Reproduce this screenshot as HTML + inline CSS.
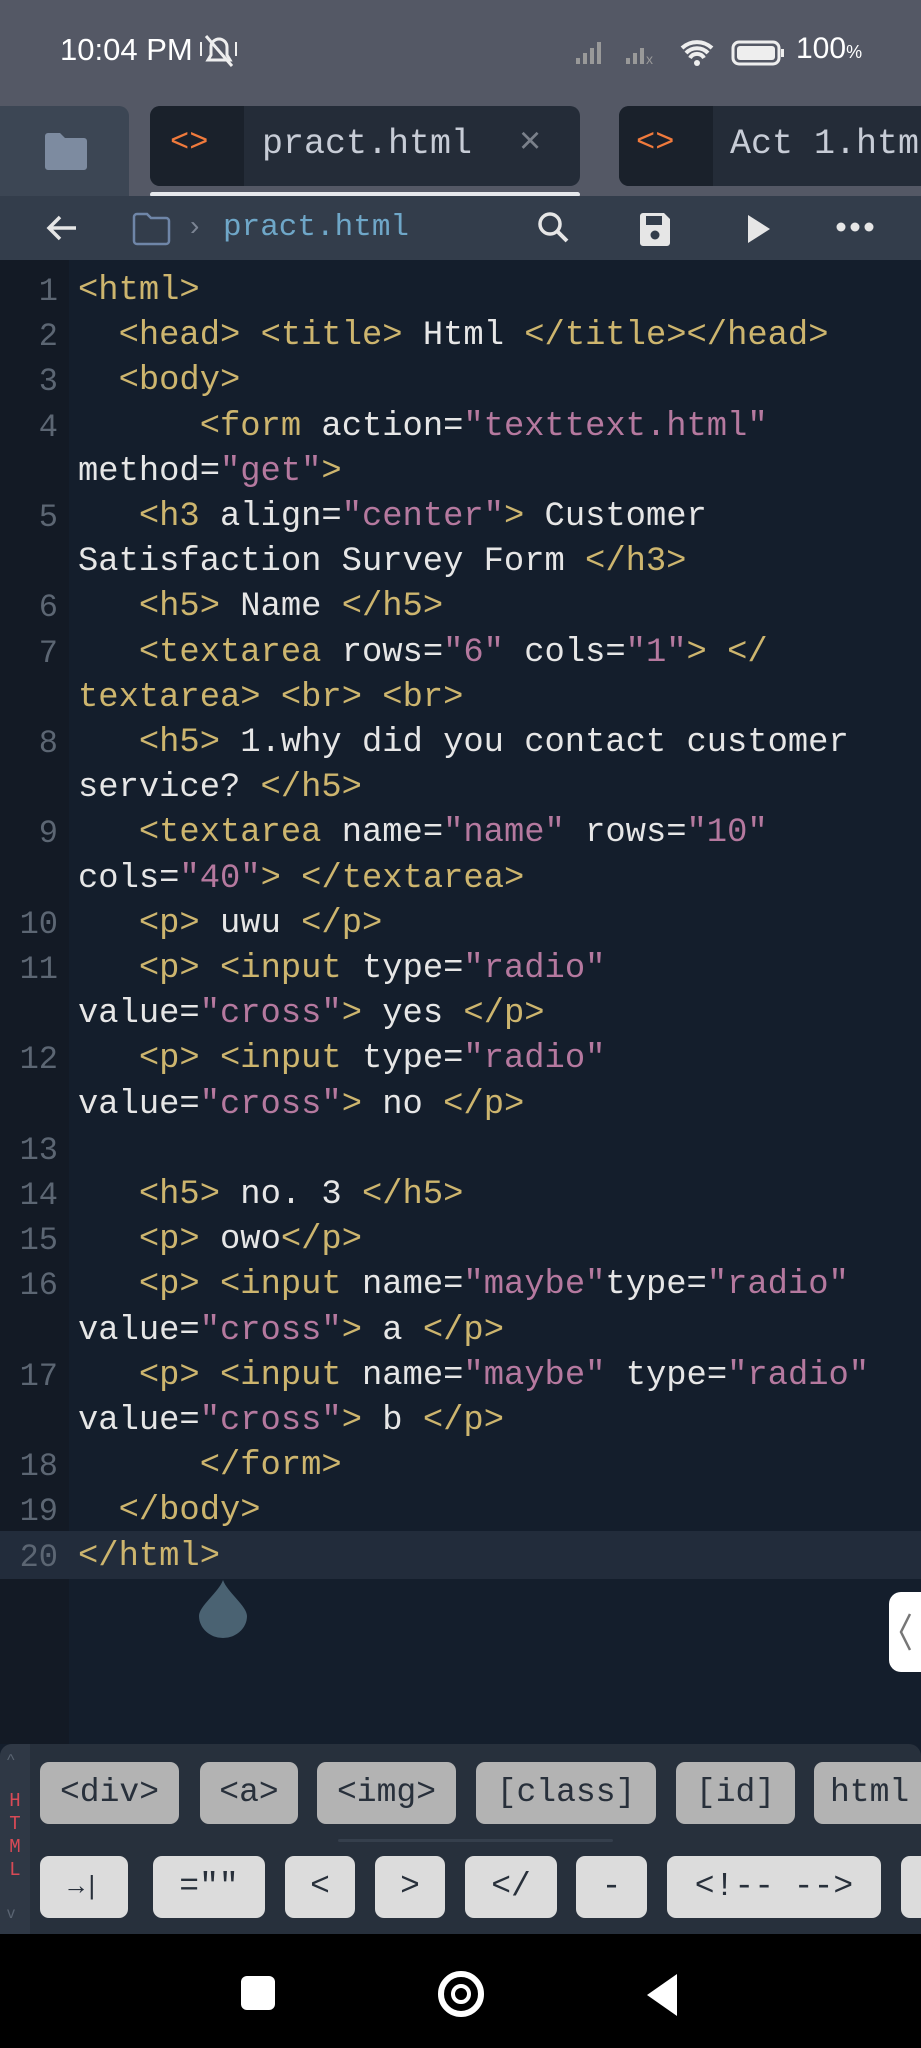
<!DOCTYPE html>
<html><head><meta charset="utf-8">
<style>
*{margin:0;padding:0;box-sizing:border-box}
body{width:921px;height:2048px;overflow:hidden;background:#141e2c;font-family:"Liberation Sans",sans-serif;position:relative}
.abs{position:absolute;white-space:nowrap}
.mono{font-family:"Liberation Mono",monospace}
#status{left:0;top:0;width:921px;height:106px;background:#545865}
#tabs{left:0;top:106px;width:921px;height:90px;background:#545865}
#toolbar{left:0;top:196px;width:921px;height:64px;background:#333d4b}
#gutter{left:0;top:260px;width:69px;height:1484px;background:#131a25}
.ln{position:absolute;left:0;width:58px;text-align:right;color:#5c6673;font-size:32px;font-family:"Liberation Mono",monospace;line-height:45.2px}
#code{position:absolute;left:78px;top:269px;font-family:"Liberation Mono",monospace;font-size:33.8px;color:#e6e6e6;white-space:pre;line-height:45.2px}
.t{color:#cdb56e}.v{color:#b5799f}
.btn{position:absolute;border-radius:9px;font-family:"Liberation Mono",monospace;font-size:33px;color:#28303b;text-align:center;white-space:nowrap;overflow:hidden}
.r1{top:1762px;height:62px;line-height:62px;background:#b3b3b3}
.r2{top:1856px;height:62px;line-height:62px;background:#dcdcdc}
</style></head><body>
<div id="status" class="abs"></div>
<div class="abs" style="left:60px;top:32px;color:#fff;font-size:31px;">10:04 PM</div>
<svg class="abs" style="left:198px;top:32px" width="42" height="38" viewBox="0 0 42 38"><path d="M10 28h22l-3-5V15a8 8 0 0 0-16 0v8z" fill="none" stroke="#eee" stroke-width="3"/><path d="M8 4l26 30" stroke="#eee" stroke-width="3"/><path d="M3 10v14M38 10v14" stroke="#eee" stroke-width="2"/></svg>
<svg class="abs" style="left:576px;top:36px" width="220" height="32" viewBox="0 0 220 32"><g fill="#999"><rect x="0" y="22" width="4" height="6"/><rect x="7" y="17" width="4" height="11"/><rect x="14" y="12" width="4" height="16"/><rect x="21" y="6" width="4" height="22"/><rect x="50" y="22" width="4" height="6"/><rect x="57" y="17" width="4" height="11"/><rect x="64" y="12" width="4" height="16"/><text x="70" y="28" font-size="14" fill="#999">x</text></g><path d="M106 12a22 22 0 0 1 30 0M110 17a15 15 0 0 1 22 0M114 22a8 8 0 0 1 14 0" stroke="#eee" stroke-width="4" fill="none"/><circle cx="121" cy="27" r="3" fill="#eee"/><rect x="157" y="6" width="46" height="22" rx="6" fill="none" stroke="#eee" stroke-width="3"/><rect x="161" y="10" width="38" height="14" rx="3" fill="#eee"/><rect x="205" y="13" width="3" height="8" fill="#eee"/></svg>
<div class="abs" style="left:796px;top:32px;color:#fff;font-size:30px;">100<span style="font-size:18px">%</span></div>

<div id="tabs" class="abs"></div>
<div class="abs" style="left:0;top:106px;width:129px;height:90px;background:#3c4654;border-radius:0 10px 0 0"></div>
<svg class="abs" style="left:42px;top:132px" width="48" height="40" viewBox="0 0 48 40"><path d="M3 4a3 3 0 0 1 3-3h12l5 5h19a3 3 0 0 1 3 3v26a3 3 0 0 1-3 3H6a3 3 0 0 1-3-3z" fill="#7d8ba0"/></svg>
<div class="abs" style="left:150px;top:106px;width:430px;height:80px;background:#242c38;border-radius:10px;overflow:hidden"><div style="width:94px;height:80px;background:#1a212b"></div></div>
<div class="abs mono" style="left:170px;top:124px;color:#f07a3c;font-size:32px">&lt;&gt;</div>
<div class="abs mono" style="left:262px;top:124px;color:#c7ccd6;font-size:35px">pract.html</div>
<div class="abs" style="left:519px;top:120px;color:#7a808a;font-size:38px">×</div>
<div class="abs" style="left:150px;top:192px;width:430px;height:5px;background:#e6e8ec;border-radius:3px"></div>
<div class="abs" style="left:619px;top:106px;width:320px;height:80px;background:#242c38;border-radius:10px;overflow:hidden"><div style="width:94px;height:80px;background:#1a212b"></div></div>
<div class="abs mono" style="left:636px;top:124px;color:#f07a3c;font-size:32px">&lt;&gt;</div>
<div class="abs mono" style="left:730px;top:124px;color:#c7ccd6;font-size:35px">Act 1.html</div>

<div id="toolbar" class="abs"></div>
<svg class="abs" style="left:44px;top:210px" width="36" height="36" viewBox="0 0 36 36"><path d="M32 18H6M16 7L5 18l11 11" stroke="#e6e6e6" stroke-width="3.5" fill="none"/></svg>
<svg class="abs" style="left:132px;top:212px" width="40" height="34" viewBox="0 0 40 34"><path d="M2 5a3 3 0 0 1 3-3h10l4 4h15a3 3 0 0 1 3 3v20a3 3 0 0 1-3 3H5a3 3 0 0 1-3-3z" fill="none" stroke="#6f86a8" stroke-width="2.5"/></svg>
<div class="abs" style="left:190px;top:210px;color:#7c8594;font-size:28px">›</div>
<div class="abs mono" style="left:223px;top:210px;color:#6fa7c8;font-size:31px">pract.html</div>
<svg class="abs" style="left:536px;top:210px" width="36" height="36" viewBox="0 0 36 36"><circle cx="14" cy="14" r="10" stroke="#e6e6e6" stroke-width="3.5" fill="none"/><path d="M21 21l10 10" stroke="#e6e6e6" stroke-width="4"/></svg>
<svg class="abs" style="left:638px;top:211px" width="34" height="36" viewBox="0 0 34 36"><path d="M4 2h22l6 6v24a3 3 0 0 1-3 3H5a3 3 0 0 1-3-3V5a3 3 0 0 1 3-3z" fill="#e6e6e6"/><rect x="8" y="5" width="16" height="9" fill="#333d4b"/><circle cx="17" cy="24" r="4.5" fill="#333d4b"/></svg>
<svg class="abs" style="left:744px;top:212px" width="30" height="34" viewBox="0 0 30 34"><path d="M4 3l22 14L4 31z" fill="#e6e6e6"/></svg>
<svg class="abs" style="left:835px;top:220px" width="40" height="14" viewBox="0 0 40 14"><circle cx="6" cy="7" r="4.5" fill="#e6e6e6"/><circle cx="20" cy="7" r="4.5" fill="#e6e6e6"/><circle cx="34" cy="7" r="4.5" fill="#e6e6e6"/></svg>

<div id="gutter" class="abs"></div>
<div class="abs" style="left:0;top:1531px;width:921px;height:48px;background:#222c3b"></div>
<div class="abs" style="left:0;top:269px;width:69px">
<div class="ln" style="top:0">1</div><div class="ln" style="top:45.2px">2</div><div class="ln" style="top:90.4px">3</div><div class="ln" style="top:135.6px">4</div>
<div class="ln" style="top:226px">5</div><div class="ln" style="top:316.4px">6</div><div class="ln" style="top:361.6px">7</div><div class="ln" style="top:452px">8</div>
<div class="ln" style="top:542.4px">9</div><div class="ln" style="top:632.8px">10</div><div class="ln" style="top:678px">11</div><div class="ln" style="top:768.4px">12</div>
<div class="ln" style="top:858.8px">13</div><div class="ln" style="top:904px">14</div><div class="ln" style="top:949.2px">15</div><div class="ln" style="top:994.4px">16</div>
<div class="ln" style="top:1084.8px">17</div><div class="ln" style="top:1175.2px">18</div><div class="ln" style="top:1220.4px">19</div><div class="ln" style="top:1265.6px">20</div>
</div>
<div id="code"><span class="t">&lt;html&gt;</span>
  <span class="t">&lt;head&gt;</span> <span class="t">&lt;title&gt;</span> Html <span class="t">&lt;/title&gt;&lt;/head&gt;</span>
  <span class="t">&lt;body&gt;</span>
      <span class="t">&lt;form</span> action=<span class="v">"texttext.html"</span>
method=<span class="v">"get"</span><span class="t">&gt;</span>
   <span class="t">&lt;h3</span> align=<span class="v">"center"</span><span class="t">&gt;</span> Customer
Satisfaction Survey Form <span class="t">&lt;/h3&gt;</span>
   <span class="t">&lt;h5&gt;</span> Name <span class="t">&lt;/h5&gt;</span>
   <span class="t">&lt;textarea</span> rows=<span class="v">"6"</span> cols=<span class="v">"1"</span><span class="t">&gt;</span> <span class="t">&lt;/</span>
<span class="t">textarea&gt;</span> <span class="t">&lt;br&gt;</span> <span class="t">&lt;br&gt;</span>
   <span class="t">&lt;h5&gt;</span> 1.why did you contact customer
service? <span class="t">&lt;/h5&gt;</span>
   <span class="t">&lt;textarea</span> name=<span class="v">"name"</span> rows=<span class="v">"10"</span>
cols=<span class="v">"40"</span><span class="t">&gt;</span> <span class="t">&lt;/textarea&gt;</span>
   <span class="t">&lt;p&gt;</span> uwu <span class="t">&lt;/p&gt;</span>
   <span class="t">&lt;p&gt;</span> <span class="t">&lt;input</span> type=<span class="v">"radio"</span>
value=<span class="v">"cross"</span><span class="t">&gt;</span> yes <span class="t">&lt;/p&gt;</span>
   <span class="t">&lt;p&gt;</span> <span class="t">&lt;input</span> type=<span class="v">"radio"</span>
value=<span class="v">"cross"</span><span class="t">&gt;</span> no <span class="t">&lt;/p&gt;</span>

   <span class="t">&lt;h5&gt;</span> no. 3 <span class="t">&lt;/h5&gt;</span>
   <span class="t">&lt;p&gt;</span> owo<span class="t">&lt;/p&gt;</span>
   <span class="t">&lt;p&gt;</span> <span class="t">&lt;input</span> name=<span class="v">"maybe"</span>type=<span class="v">"radio"</span>
value=<span class="v">"cross"</span><span class="t">&gt;</span> a <span class="t">&lt;/p&gt;</span>
   <span class="t">&lt;p&gt;</span> <span class="t">&lt;input</span> name=<span class="v">"maybe"</span> type=<span class="v">"radio"</span>
value=<span class="v">"cross"</span><span class="t">&gt;</span> b <span class="t">&lt;/p&gt;</span>
      <span class="t">&lt;/form&gt;</span>
  <span class="t">&lt;/body&gt;</span>
<span class="t">&lt;/html&gt;</span></div>

<svg class="abs" style="left:199px;top:1580px" width="48" height="58" viewBox="0 0 48 58"><path d="M24 0C20 12 0 26 0 36a24 22 0 0 0 48 0C48 26 28 12 24 0z" fill="#4a6272"/></svg>
<div class="abs" style="left:889px;top:1592px;width:40px;height:80px;background:#fff;border-radius:12px 0 0 12px"></div>
<svg class="abs" style="left:896px;top:1612px" width="20" height="40" viewBox="0 0 20 40"><path d="M14 2L5 20l9 18" stroke="#777" stroke-width="2.5" fill="none"/></svg>

<div class="abs" style="left:0;top:1744px;width:921px;height:190px;background:#27303c;border-radius:12px 12px 0 0"></div>
<div class="abs" style="left:0;top:1744px;width:30px;height:190px;background:#2f3845;border-radius:12px 0 0 0"></div>
<div class="abs mono" style="left:7px;top:1790px;color:#d84a56;font-size:19px;line-height:23px;width:16px;text-align:center">H<br>T<br>M<br>L</div>
<div class="abs" style="left:7px;top:1752px;color:#5a6472;font-size:16px">^</div>
<div class="abs" style="left:7px;top:1905px;color:#5a6472;font-size:16px">v</div>
<div class="btn r1" style="left:40px;width:139px">&lt;div&gt;</div>
<div class="btn r1" style="left:200px;width:98px">&lt;a&gt;</div>
<div class="btn r1" style="left:317px;width:139px">&lt;img&gt;</div>
<div class="btn r1" style="left:476px;width:180px">[class]</div>
<div class="btn r1" style="left:676px;width:119px">[id]</div>
<div class="btn r1" style="left:814px;width:130px;text-align:left;padding-left:16px">html</div>
<div class="abs" style="left:338px;top:1839px;width:275px;height:3px;background:#353f4c;border-radius:2px"></div>
<div class="btn r2" style="left:40px;width:88px;font-size:26px">→|</div>
<div class="btn r2" style="left:153px;width:112px">=""</div>
<div class="btn r2" style="left:285px;width:70px">&lt;</div>
<div class="btn r2" style="left:375px;width:70px">&gt;</div>
<div class="btn r2" style="left:465px;width:92px">&lt;/</div>
<div class="btn r2" style="left:576px;width:71px">-</div>
<div class="btn r2" style="left:667px;width:214px">&lt;!-- --&gt;</div>
<div class="btn r2" style="left:901px;width:40px"></div>

<div class="abs" style="left:0;top:1934px;width:921px;height:114px;background:#000"></div>
<div class="abs" style="left:241px;top:1976px;width:34px;height:34px;background:#fff;border-radius:6px"></div>
<div class="abs" style="left:438px;top:1971px;width:46px;height:46px;border:6px solid #fff;border-radius:50%"></div>
<div class="abs" style="left:451px;top:1984px;width:20px;height:20px;border:4px solid #fff;border-radius:50%"></div>
<svg class="abs" style="left:645px;top:1973px" width="34" height="44" viewBox="0 0 34 44"><path d="M32 1L2 22l30 21z" fill="#fff"/></svg>
</body></html>
